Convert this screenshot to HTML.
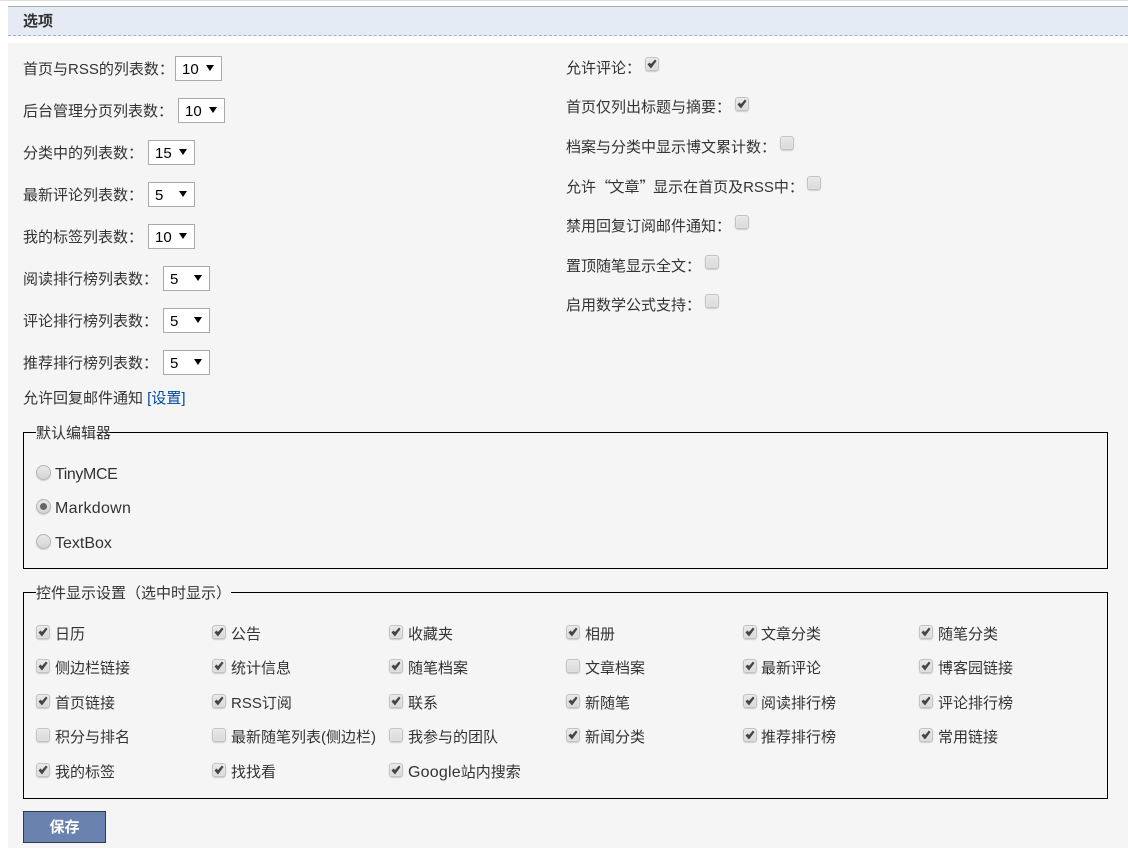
<!DOCTYPE html>
<html lang="zh-CN">
<head>
<meta charset="utf-8">
<title>选项</title>
<style>
html,body{margin:0;padding:0;background:#fff}
body{position:relative;width:1128px;height:851px;overflow:hidden;font-family:"Liberation Sans","Noto Sans CJK SC",sans-serif;font-size:15px;color:#333}
div,span,a{position:absolute;box-sizing:border-box}
.t{line-height:20px;height:20px;white-space:nowrap;margin-top:1px}
.s{width:47px;height:25px;background:#fff;border:1px solid #aaa;color:#000;line-height:26px;padding-left:6px}
.s i{position:absolute;left:30px;top:8px;width:0;height:0;border-left:4px solid transparent;border-right:4px solid transparent;border-top:6px solid #000}
.c{width:14px;height:14px;border:1px solid #c2c2c2;border-radius:3px;background:linear-gradient(#e8e8e8,#dadada);box-shadow:0 1px 1px #ccc,inset 0 0 1px #fff}
.k:after{content:"";position:absolute;left:-1px;top:-1px;width:14px;height:14px;background:#444;clip-path:polygon(2.5px 7.5px,4.5px 5.5px,6px 7px,10px 2.5px,11.5px 4px,6px 11.5px)}
.r{width:15px;height:15px;border:1px solid #b5b5b5;border-radius:50%;background:linear-gradient(#e8e8e8,#d5d5d5);box-shadow:0 1px 1px #ccc}
.r i{position:absolute;left:3px;top:3px;width:7px;height:7px;border-radius:50%;background:#666}
.f{left:23px;width:1085px;border:1px solid #000}
.l{background:#f5f5f5}
.q{position:static;font-family:"Noto Sans CJK SC",sans-serif;letter-spacing:-1.5px}
.g{position:static;font-size:16px;letter-spacing:.2px}
</style>
</head>
<body>
<div style="left:0;top:0;width:1128px;height:1px;background:#ddd"></div>
<div style="left:8px;top:6px;width:1120px;height:1px;background:#aaa"></div>
<div style="left:8px;top:7px;width:1120px;height:29px;background:#e4ebf5;border-bottom:1px dashed #a9b0bd"></div>
<div class="t" style="left:23px;top:11px;font-weight:bold">选项</div>
<div style="left:8px;top:43px;width:1120px;height:805px;background:#f5f5f5"></div>

<div class="t" style="left:23px;top:59px">首页与RSS的列表数：</div><div class="s" style="left:175px;top:56px">10<i></i></div>
<div class="t" style="left:23px;top:101px">后台管理分页列表数：</div><div class="s" style="left:178px;top:98px">10<i></i></div>
<div class="t" style="left:23px;top:143px">分类中的列表数：</div><div class="s" style="left:148px;top:140px">15<i></i></div>
<div class="t" style="left:23px;top:185px">最新评论列表数：</div><div class="s" style="left:148px;top:182px">5<i></i></div>
<div class="t" style="left:23px;top:227px">我的标签列表数：</div><div class="s" style="left:148px;top:224px">10<i></i></div>
<div class="t" style="left:23px;top:269px">阅读排行榜列表数：</div><div class="s" style="left:163px;top:266px">5<i></i></div>
<div class="t" style="left:23px;top:311px">评论排行榜列表数：</div><div class="s" style="left:163px;top:308px">5<i></i></div>
<div class="t" style="left:23px;top:353px">推荐排行榜列表数：</div><div class="s" style="left:163px;top:350px">5<i></i></div>
<div class="t" style="left:23px;top:388px">允许回复邮件通知 <a href="#" style="position:static;color:#004b9e;text-decoration:none">[设置]</a></div>

<div class="t" style="left:566px;top:58px">允许评论：</div><div class="c k" style="left:645px;top:57px"></div>
<div class="t" style="left:566px;top:97px">首页仅列出标题与摘要：</div><div class="c k" style="left:735px;top:97px"></div>
<div class="t" style="left:566px;top:137px">档案与分类中显示博文累计数：</div><div class="c" style="left:780px;top:136px"></div>
<div class="t" style="left:566px;top:176px">允许<span class="q">“</span>文章<span class="q">”</span>显示在首页及RSS中：</div><div class="c" style="left:807px;top:176px"></div>
<div class="t" style="left:566px;top:216px">禁用回复订阅邮件通知：</div><div class="c" style="left:735px;top:215px"></div>
<div class="t" style="left:566px;top:256px">置顶随笔显示全文：</div><div class="c" style="left:705px;top:255px"></div>
<div class="t" style="left:566px;top:295px">启用数学公式支持：</div><div class="c" style="left:705px;top:294px"></div>

<div class="f" style="top:432px;height:137px"></div>
<div class="t l" style="left:36px;top:423px;width:74px">默认编辑器</div>
<div class="r" style="left:36px;top:465px"></div><div class="t" style="left:55px;top:464px;font-size:16px;letter-spacing:-.4px">TinyMCE</div>
<div class="r" style="left:36px;top:499px"><i></i></div><div class="t" style="left:55px;top:498px;font-size:16px;letter-spacing:.3px">Markdown</div>
<div class="r" style="left:36px;top:534px"></div><div class="t" style="left:55px;top:533px;font-size:16px">TextBox</div>

<div class="f" style="top:592px;height:207px"></div>
<div class="t l" style="left:36px;top:583px;width:195px">控件显示设置（选中时显示）</div>

<div class="c k" style="left:36px;top:625px"></div><div class="t" style="left:55px;top:624px">日历</div>
<div class="c k" style="left:212px;top:625px"></div><div class="t" style="left:231px;top:624px">公告</div>
<div class="c k" style="left:389px;top:625px"></div><div class="t" style="left:408px;top:624px">收藏夹</div>
<div class="c k" style="left:566px;top:625px"></div><div class="t" style="left:585px;top:624px">相册</div>
<div class="c k" style="left:743px;top:625px"></div><div class="t" style="left:761px;top:624px">文章分类</div>
<div class="c k" style="left:919px;top:625px"></div><div class="t" style="left:938px;top:624px">随笔分类</div>

<div class="c k" style="left:36px;top:659px"></div><div class="t" style="left:55px;top:658px">侧边栏链接</div>
<div class="c k" style="left:212px;top:659px"></div><div class="t" style="left:231px;top:658px">统计信息</div>
<div class="c k" style="left:389px;top:659px"></div><div class="t" style="left:408px;top:658px">随笔档案</div>
<div class="c" style="left:566px;top:659px"></div><div class="t" style="left:585px;top:658px">文章档案</div>
<div class="c k" style="left:743px;top:659px"></div><div class="t" style="left:761px;top:658px">最新评论</div>
<div class="c k" style="left:919px;top:659px"></div><div class="t" style="left:938px;top:658px">博客园链接</div>

<div class="c k" style="left:36px;top:694px"></div><div class="t" style="left:55px;top:693px">首页链接</div>
<div class="c k" style="left:212px;top:694px"></div><div class="t" style="left:231px;top:693px">RSS订阅</div>
<div class="c k" style="left:389px;top:694px"></div><div class="t" style="left:408px;top:693px">联系</div>
<div class="c k" style="left:566px;top:694px"></div><div class="t" style="left:585px;top:693px">新随笔</div>
<div class="c k" style="left:743px;top:694px"></div><div class="t" style="left:761px;top:693px">阅读排行榜</div>
<div class="c k" style="left:919px;top:694px"></div><div class="t" style="left:938px;top:693px">评论排行榜</div>

<div class="c" style="left:36px;top:728px"></div><div class="t" style="left:55px;top:727px">积分与排名</div>
<div class="c" style="left:212px;top:728px"></div><div class="t" style="left:231px;top:727px">最新随笔列表(侧边栏)</div>
<div class="c" style="left:389px;top:728px"></div><div class="t" style="left:408px;top:727px">我参与的团队</div>
<div class="c k" style="left:566px;top:728px"></div><div class="t" style="left:585px;top:727px">新闻分类</div>
<div class="c k" style="left:743px;top:728px"></div><div class="t" style="left:761px;top:727px">推荐排行榜</div>
<div class="c k" style="left:919px;top:728px"></div><div class="t" style="left:938px;top:727px">常用链接</div>

<div class="c k" style="left:36px;top:763px"></div><div class="t" style="left:55px;top:762px">我的标签</div>
<div class="c k" style="left:212px;top:763px"></div><div class="t" style="left:231px;top:762px">找找看</div>
<div class="c k" style="left:389px;top:763px"></div><div class="t" style="left:408px;top:762px"><span class="g">Google</span>站内搜索</div>

<div style="left:23px;top:811px;width:83px;height:32px;background:#6a83ae;border:1px solid #333a4a;color:#fff;font-weight:bold;text-align:center;line-height:31px">保存</div>
</body>
</html>
